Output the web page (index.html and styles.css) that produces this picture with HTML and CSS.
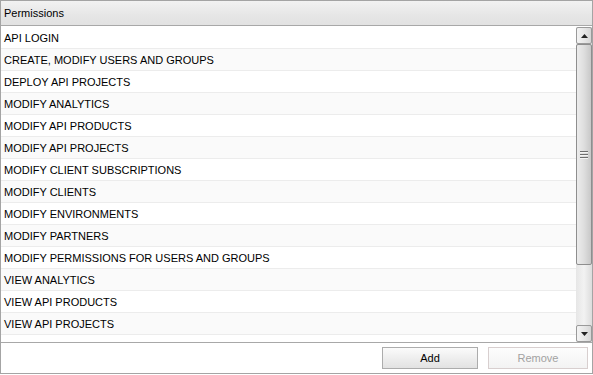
FILE: index.html
```html
<!DOCTYPE html>
<html lang="en">
<head>
  <meta charset="UTF-8" />
  <title>Permissions</title>
  <link rel="stylesheet" href="styles.css">
</head>
<body>
  <div class="panel">
    <div class="panel-header">Permissions</div>

    <div class="panel-body">
      <ul class="perm-list">
        <li>API LOGIN</li>
        <li>CREATE, MODIFY USERS AND GROUPS</li>
        <li>DEPLOY API PROJECTS</li>
        <li>MODIFY ANALYTICS</li>
        <li>MODIFY API PRODUCTS</li>
        <li>MODIFY API PROJECTS</li>
        <li>MODIFY CLIENT SUBSCRIPTIONS</li>
        <li>MODIFY CLIENTS</li>
        <li>MODIFY ENVIRONMENTS</li>
        <li>MODIFY PARTNERS</li>
        <li>MODIFY PERMISSIONS FOR USERS AND GROUPS</li>
        <li>VIEW ANALYTICS</li>
        <li>VIEW API PRODUCTS</li>
        <li>VIEW API PROJECTS</li>
        <li></li>
      </ul>

      <div class="scrollbar">
        <div class="sb-btn">
          <svg width="7" height="4" viewBox="0 0 7 4"><path d="M3.5 0 L7 4 L0 4 Z" fill="#222"/></svg>
        </div>
        <div class="sb-track">
          <div class="sb-thumb">
            <span class="grip"></span>
            <span class="grip"></span>
            <span class="grip"></span>
          </div>
        </div>
        <div class="sb-btn">
          <svg width="7" height="4" viewBox="0 0 7 4"><path d="M0 0 L7 0 L3.5 4 Z" fill="#222"/></svg>
        </div>
      </div>
    </div>

    <div class="panel-footer">
      <button class="btn btn-add">Add</button>
      <button class="btn btn-remove" disabled>Remove</button>
    </div>
  </div>
</body>
</html>
```

FILE: styles.css
```css
* { margin: 0; padding: 0; box-sizing: border-box; }
body {
  font-family: "Liberation Sans", Arial, sans-serif;
  font-size: 11px;
  color: #000;
  background: #fff;
}
.panel {
  width: 593px;
  height: 374px;
  border: 1px solid #a4a4a4;
  display: flex;
  flex-direction: column;
}
.panel-header {
  height: 25px;
  line-height: 24px;
  padding-left: 3px;
  background: linear-gradient(#f2f2f2, #e6e6e6 60%, #e2e2e2);
  border-bottom: 1px solid #a8a8a8;
}
.panel-body {
  height: 317px;
  display: flex;
  border-bottom: 1px solid #a8a8a8;
  padding-top: 1px;
}
.perm-list {
  flex: 1;
  list-style: none;
  overflow: hidden;
}
.perm-list li {
  height: 22px;
  line-height: 23px;
  padding-left: 3px;
  border-bottom: 1px solid #ececec;
  white-space: nowrap;
}
.perm-list li:nth-child(even) {
  background: #fafafa;
}
.scrollbar {
  width: 16px;
  display: flex;
  flex-direction: column;
  background: linear-gradient(to right, #e6e6e6, #f2f2f2 50%, #dcdcdc);
}
.sb-btn {
  height: 17px;
  border: 1px solid #9a9a9a;
  border-radius: 2px;
  background: linear-gradient(to right, #f4f4f4, #e4e4e4 60%, #d6d6d6);
  display: flex;
  align-items: center;
  justify-content: center;
}
.sb-track {
  flex: 1;
  display: flex;
  flex-direction: column;
}
.sb-thumb {
  height: 221px;
  border: 1px solid #8e8e8e;
  border-radius: 2px;
  background: linear-gradient(to right, #ececec, #dedede 50%, #c8c8c8);
  display: flex;
  flex-direction: column;
  align-items: center;
  justify-content: center;
  gap: 1px;
}
.grip {
  width: 8px;
  height: 2px;
  border-top: 1px solid #6f6f6f;
  border-bottom: 1px solid #f4f4f4;
}
.panel-footer {
  flex: 1;
  display: flex;
  justify-content: flex-end;
  align-items: flex-start;
  gap: 10px;
  padding: 4px 4px 0 0;
}
.btn {
  height: 22px;
  font-family: "Liberation Sans", Arial, sans-serif;
  font-size: 11px;
  background: linear-gradient(#fbfbfb, #eeeeee 50%, #e2e2e2);
  border: 1px solid #acacac;
  border-radius: 0;
  color: #000;
}
.btn-add {
  width: 96px;
}
.btn-remove {
  width: 100px;
  color: #a2a2a2;
  border-color: #d8cfcf;
  background: linear-gradient(#fdfdfd, #f3f3f3);
}
```
